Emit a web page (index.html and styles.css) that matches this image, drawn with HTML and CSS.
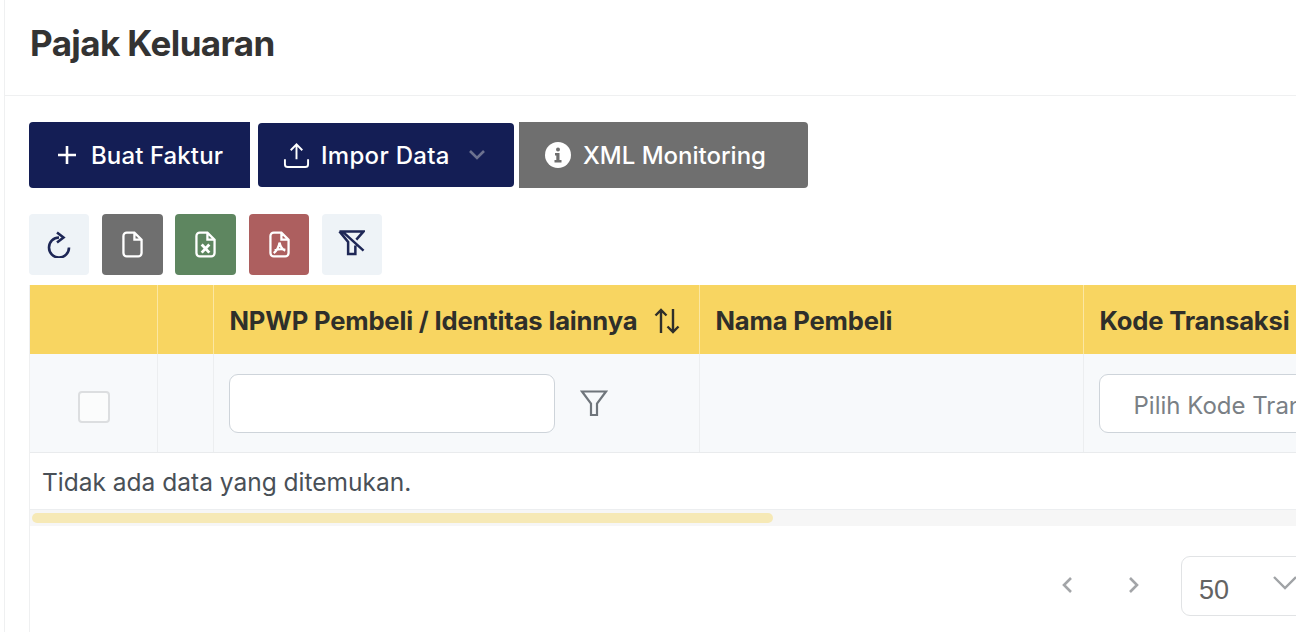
FILE: index.html
```html
<!DOCTYPE html>
<html lang="id">
<head>
<meta charset="utf-8">
<title>Pajak Keluaran</title>
<link rel="stylesheet" href="styles.css">
</head>
<body>
<div class="page">
  <header class="page-header"><h1 class="title">Pajak Keluaran</h1></header>
  <main class="content">
    <div class="actions">
      <button class="btn btn-navy btn-create">
        <svg class="ico-plus" viewBox="0 0 24 24"><path d="M12 3v18M3 12h18"/></svg>
        <span>Buat Faktur</span>
      </button>
      <button class="btn btn-navy btn-import">
        <svg class="ico-upload" viewBox="0 0 28 28"><path d="M14 18V3M8 8.500l6-6 6 6M2 18v5a3 3 0 0 0 3 3h18a3 3 0 0 0 3-3v-5"/></svg>
        <span>Impor Data</span>
        <svg class="ico-chev" viewBox="0 0 18 12"><path d="M2 2l7 7 7-7"/></svg>
      </button>
      <button class="btn btn-gray btn-xml">
        <svg class="ico-info" viewBox="0 0 26 26"><circle cx="13" cy="13" r="13" fill="#fff"/><circle cx="13" cy="7.500" r="2" fill="#6f6f6f"/><path d="M10 11h4.500v7H16.500v2.500h-7V18h1.800v-4.500H10z" fill="#6f6f6f"/></svg>
        <span>XML Monitoring</span>
      </button>
    </div>
    <div class="tools">
      <button class="tool tool-light">
        <svg class="ico-tool" viewBox="0 0 26 27"><path class="navy" d="M13 6.500A10 10 0 1 0 23 16.500M11 1.500l6.500 5-6.500 5"/></svg>
      </button>
      <button class="tool tool-gray tool-w">
        <svg class="ico-file" viewBox="0 0 22 28"><path d="M13 1.500H5a3.500 3.500 0 0 0-3.500 3.500v18A3.500 3.500 0 0 0 5 26.500h12a3.500 3.500 0 0 0 3.500-3.500V9zM13 1.500V9h7.500"/></svg>
      </button>
      <button class="tool tool-green tool-w">
        <svg class="ico-file" viewBox="0 0 22 28"><path d="M13 1.500H5a3.500 3.500 0 0 0-3.500 3.500v18A3.500 3.500 0 0 0 5 26.500h12a3.500 3.500 0 0 0 3.500-3.500V9zM13 1.500V9h7.500"/><path class="ico-x" d="M7 14l8 8.500M15 14l-8 8.500"/></svg>
      </button>
      <button class="tool tool-red tool-w">
        <svg class="ico-file" viewBox="0 0 22 28"><path d="M13 1.500H5a3.500 3.500 0 0 0-3.500 3.500v18A3.500 3.500 0 0 0 5 26.500h12a3.500 3.500 0 0 0 3.500-3.500V9zM13 1.500V9h7.500M11 12c-.6 4-2.500 8-6 11M11 12c.8 4 2.500 7 6 8.500M6 20c3-1 8-1.500 11-.5"/></svg>
      </button>
      <button class="tool tool-light tool-filter">
        <svg class="ico-filter" viewBox="0 0 28 28"><path class="navy" d="M1.500 2.500h25l-7.500 8.500M1.500 2.500l9 11V26h7.500V17M4.500 2.500l22 20"/></svg>
      </button>
    </div>
    <div class="table-wrap">
      <table class="grid">
        <colgroup>
          <col class="c1"><col class="c2"><col class="c3"><col class="c4"><col class="c5">
        </colgroup>
        <thead>
          <tr class="head">
            <th></th>
            <th></th>
            <th><div class="th-sort"><span>NPWP Pembeli / Identitas lainnya</span>
              <svg class="ico-sort" viewBox="0 0 28 28"><path d="M8 26V3M2.500 8.500L8 3l5.500 5.500M20 2v23M14.500 19.500L20 25l5.500-5.500"/></svg>
            </div></th>
            <th>Nama Pembeli</th>
            <th>Kode Transaksi</th>
          </tr>
        </thead>
        <tbody>
          <tr class="filter">
            <td class="center"><span class="check"></span></td>
            <td></td>
            <td><div class="filter-cell"><span class="input input-text"></span>
              <svg class="ico-funnel" viewBox="0 0 28 28"><path d="M2 2.500h24L17 14.500V26h-6V14.500z"/></svg>
            </div></td>
            <td></td>
            <td><span class="input input-select">Pilih Kode Tran</span></td>
          </tr>
          <tr class="empty"><td colspan="5"><span class="empty-text">Tidak ada data yang ditemukan.</span></td></tr>
        </tbody>
      </table>
      <div class="scrollbar"><div class="thumb"></div></div>
      <div class="pager">
        <svg class="ico-page" viewBox="0 0 12 18"><path d="M10 2L3 9l7 7"/></svg>
        <svg class="ico-page next" viewBox="0 0 12 18"><path d="M2 2l7 7-7 7"/></svg>
        <div class="size"><span>50</span>
          <svg class="ico-size" viewBox="0 0 26 16"><path d="M2 2l11 11L24 2"/></svg>
        </div>
      </div>
    </div>
  </main>
</div>
</body>
</html>
```
FILE: styles.css
```css
* { box-sizing: border-box; }
html, body { margin: 0; padding: 0; width: 1296px; height: 632px; overflow: hidden; background: #fff; }
body { font-family: Inter, "Liberation Sans", sans-serif; color: #343a40; }
svg { display: block; flex: none; fill: none; }

.page { margin-left: 4px; width: 1292px; height: 632px; border-left: 1px solid #eff0f1; overflow: hidden; }
.page-header { height: 96px; border-bottom: 1px solid #eff0f1; padding: 21px 0 0 25px; }
.title { margin: 0; font-size: 35px; line-height: 44px; font-weight: 700; letter-spacing: -0.6px; color: #333; }

.content { padding: 26px 0 0 24px; }
.actions { display: flex; align-items: center; height: 66px; }
.btn { display: flex; align-items: center; border: 0; padding: 2px 0 0; font: 500 24px/30px Inter, sans-serif; color: #fff; }
.btn svg { margin-top: -2px; }
.btn-navy { background: #141e55; }
.btn-gray { background: #6f6f6f; }
.btn-create { width: 221px; height: 66px; padding-left: 26px; gap: 12px; border-radius: 4px 0 0 4px; }
.btn-create span { letter-spacing: 0.1px; }
.btn-import { width: 256px; height: 64px; margin-left: 8px; padding-left: 25px; border-radius: 4px; }
.btn-import span { margin-left: 11px; letter-spacing: 0.3px; }
.btn-xml { width: 289px; height: 66px; margin-left: 5px; padding-left: 26px; gap: 12px; border-radius: 0 4px 4px 0; }
.ico-plus { width: 24px; height: 24px; stroke: #fff; stroke-width: 2.6; }
.ico-upload { width: 27px; height: 27px; stroke: #fff; stroke-width: 2; }
.ico-chev { width: 18px; height: 12px; margin-left: 18px; stroke: #6c7290; stroke-width: 2.6; }
.ico-info { width: 26px; height: 26px; }

.tools { display: flex; margin-top: 26px; height: 61px; }
.tool { border: 0; padding: 0; width: 60px; height: 61px; border-radius: 4px; margin-right: 13px; display: flex; align-items: center; justify-content: center; }
.tool-w { width: 61px; margin-right: 12px; }
.tool-light { background: #eef3f7; }
.tool-gray { background: #6f6f6f; }
.tool-green { background: #5e8660; }
.tool-red { background: #ad5f5f; width: 60px; margin-left: 1px; margin-right: 13px; }
.ico-tool { width: 26px; height: 27px; }
.ico-filter { width: 27px; height: 27px; margin: -4px 0 0 -2px; }
.navy { stroke: #1e2756; stroke-width: 2.6; }
.ico-file { width: 21px; height: 27px; stroke: #fff; stroke-width: 2.400; }
.ico-x { stroke-width: 3; }

.table-wrap { margin-top: 10px; width: 1300px; height: 347px; border-left: 1px solid #eff0f1; }
.grid { border-collapse: collapse; table-layout: fixed; width: 1380px; }
.c1 { width: 127px; } .c2 { width: 56px; } .c3 { width: 486px; } .c4 { width: 384px; } .c5 { width: 327px; }
.head th { height: 69px; background: #f8d561; padding: 3px 15px 0 16px; text-align: left; font: 700 25.6px/30px Inter, sans-serif; letter-spacing: -0.17px; color: #2f2f2a; border-right: 1px solid #fbe7a2; white-space: nowrap; }
.th-sort { display: flex; align-items: center; }
.ico-sort { width: 28px; height: 28px; margin-left: 16px; stroke: #2f2f2a; stroke-width: 2.400; }
.filter td { height: 98px; background: #f7f9fb; padding: 2px 15px 0; border-right: 1px solid #eceef0; border-bottom: 1px solid #e9ebed; }
.filter td.center { text-align: center; padding-left: 17px; }
.check { display: inline-block; width: 32px; height: 32px; margin-top: 6px; vertical-align: middle; background: #fbfcfc; border: 2px solid #dcdee0; border-radius: 4px; }
.filter-cell { display: flex; align-items: center; }
.input { display: block; height: 59px; background: #fff; border: 1px solid #ced4da; border-radius: 9px; }
.input-text { width: 326px; }
.input-select { width: 300px; padding-left: 34px; font: 400 24px/61px Inter, sans-serif; color: #7a8085; white-space: nowrap; overflow: hidden; }
.ico-funnel { width: 28px; height: 28px; margin: -1px 0 0 25px; stroke: #6f757b; stroke-width: 2.200; }
.empty td { height: 57px; padding: 2px 12px 0; border-bottom: 1px solid #eceef0; font: 400 24.500px/30px Inter, sans-serif; color: #495057; white-space: nowrap; }
.empty-text { display: block; }

.scrollbar { height: 16px; background: #f6f6f6; padding: 3px 0 0 2px; }
.thumb { width: 741px; height: 10px; border-radius: 5px; background: #f6e9b6; }

.pager { display: flex; align-items: center; padding: 30px 0 0 1031px; }
.ico-page { width: 12px; height: 18px; margin-top: -2px; stroke: #a3a5a8; stroke-width: 2.600; }
.next { margin-left: 55px; }
.size { display: flex; align-items: center; width: 180px; height: 60px; margin-left: 41px; border: 1px solid #e1e3e5; border-radius: 9px; padding-left: 17px; font: 400 27px/60px "Liberation Sans", sans-serif; color: #636363; }
.size span { margin-top: 8px; }
.ico-size { width: 26px; height: 16px; margin: -6px 0 0 43px; stroke: #a0a3a6; stroke-width: 2.400; }
```
